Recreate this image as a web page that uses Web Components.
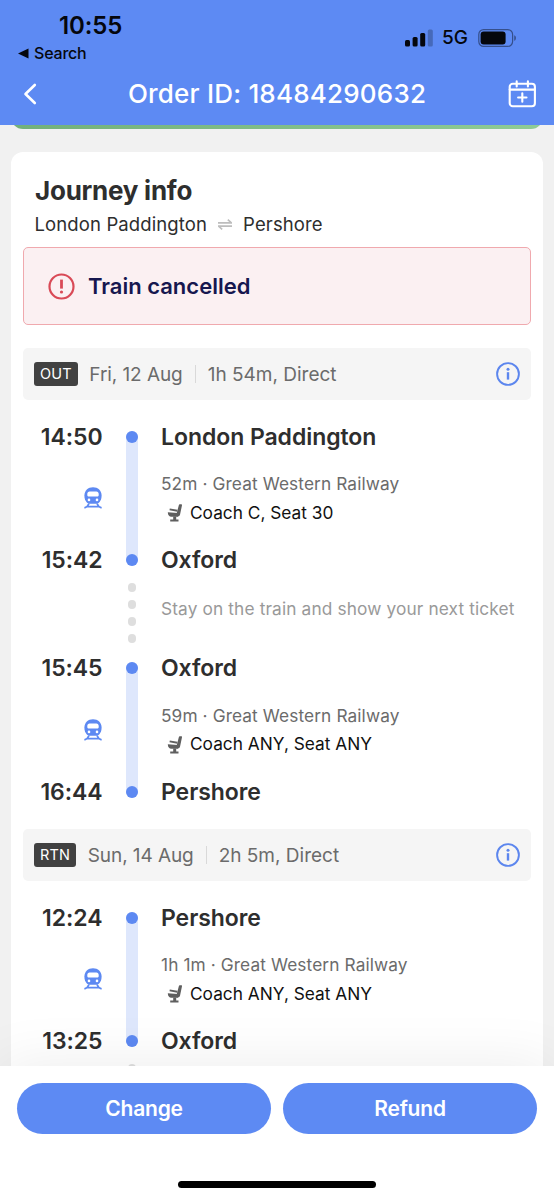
<!DOCTYPE html>
<html lang="en">
<head>
<meta charset="UTF-8">
<meta name="viewport" content="width=device-width, initial-scale=1.0">
<title>Order details</title>
<style>
  html, body {
    margin: 0;
    height: 100%;
  }
  body {
    background: #f1f1f1;
    color: #2e2e2e;
    font-family: Inter, "Liberation Sans", sans-serif;
    overflow: hidden;
  }
</style>
</head>
<body>
<order-page></order-page>

<script>
class StatusBar extends HTMLElement {
  constructor() {
    super();
    this.attachShadow({ mode: 'open' });
  }

  connectedCallback() {
    this.shadowRoot.innerHTML = `
      <style>
        :host {
          display: flex;
          justify-content: space-between;
          height: 66px;
          color: #05070d;
        }
        .left { padding: 12px 0 0 17px; }
        .time {
          padding-left: 42px;
          font-size: 24px;
          font-weight: 600;
          line-height: 28px;
          letter-spacing: -0.1px;
        }
        .back {
          display: flex;
          align-items: center;
          gap: 5px;
          height: 26px;
          font-size: 16px;
          font-weight: 500;
          letter-spacing: -0.2px;
        }
        .right {
          display: flex;
          align-items: center;
          height: 75px;
          padding-right: 37px;
          font-size: 19px;
          font-weight: 500;
        }
        .net { margin: 0 10px 0 9px; }
        svg { display: block; }
      </style>
      <div class="left">
        <div class="time">10:55</div>
        <div class="back">
          <svg width="12" height="11" viewBox="0 0 12 11"><path d="M1 5.500 11.500.4v10.200z" fill="#05070d"/></svg>
          <span>Search</span>
        </div>
      </div>
      <div class="right">
        <svg width="28" height="18" viewBox="0 0 28 18" fill="#05070d">
          <rect x="0" y="11" width="5" height="6.5" rx="1.5"/>
          <rect x="7.6" y="8" width="5" height="9.5" rx="1.5"/>
          <rect x="15.2" y="4" width="5" height="13.5" rx="1.5"/>
          <rect x="22.8" y="0.5" width="5" height="17" rx="1.5" opacity=".25"/>
        </svg>
        <span class="net">5G</span>
        <svg width="39" height="18" viewBox="0 0 39 18">
          <rect x=".8" y=".6" width="33.8" height="16.8" rx="4.8" fill="none" stroke="#05070d" stroke-opacity=".45" stroke-width="1.2"/>
          <rect x="2.6" y="2.4" width="25" height="13.2" rx="3" fill="#05070d"/>
          <path d="M36.4 6.2c1.8.8 1.8 4.8 0 5.6z" fill="#05070d" fill-opacity=".55"/>
        </svg>
      </div>
    `;
  }
}

class NavBar extends HTMLElement {
  constructor() {
    super();
    this.attachShadow({ mode: 'open' });
  }

  connectedCallback() {
    this.shadowRoot.innerHTML = `
      <style>
        :host {
          display: grid;
          grid-template-columns: 60px 1fr 60px;
          align-items: center;
          height: 56px;
          color: #fff;
        }
        .title {
          padding-bottom: 1px;
          text-align: center;
          font-size: 26px;
          font-weight: 500;
          letter-spacing: 0.2px;
          white-space: nowrap;
        }
        svg { display: block; }
        .back { margin-left: 23px; }
        .calendar { margin-left: 14px; }
      </style>
      <svg class="back" width="15" height="22" viewBox="0 0 15 22" fill="none" stroke="#fff" stroke-width="2.6" stroke-linecap="round" stroke-linejoin="round">
        <path d="M11.800 2 2.500 11 11.800 20"/>
      </svg>
      <div class="title"><slot></slot></div>
      <svg class="calendar" width="28" height="28" viewBox="0 0 28 28" fill="none" stroke="#fff" stroke-width="2.1" stroke-linecap="round">
        <rect x="1.700" y="3.800" width="25.200" height="22.400" rx="3"/>
        <path d="M1.700 9.600h25.200M8.700 1.200v5.200M19.900 1.200v5.200M14.300 13.300v8.400M10.100 17.500h8.400"/>
      </svg>
    `;
  }
}

class AlertBox extends HTMLElement {
  constructor() {
    super();
    this.attachShadow({ mode: 'open' });
  }

  connectedCallback() {
    this.shadowRoot.innerHTML = `
      <style>
        :host {
          display: flex;
          align-items: center;
          gap: 13px;
          box-sizing: border-box;
          height: 78px;
          margin: 0 12px;
          padding-left: 24px;
          border: 1.5px solid #f0a9ae;
          border-radius: 5px;
          background: #fbf0f2;
          color: #16174f;
          font-size: 22px;
          font-weight: 600;
        }
        svg { display: block; }
      </style>
      <svg width="27" height="27" viewBox="0 0 27 27">
        <circle cx="13.5" cy="13.5" r="12" fill="none" stroke="#d94a57" stroke-width="2.2"/>
        <path d="M13.5 6.600v9" stroke="#d94a57" stroke-width="2.8"/>
        <circle cx="13.5" cy="19" r="1.6" fill="#d94a57"/>
      </svg>
      <span><slot></slot></span>
    `;
  }
}

class LegHeader extends HTMLElement {
  constructor() {
    super();
    this.attachShadow({ mode: 'open' });
  }

  connectedCallback() {
    this.shadowRoot.innerHTML = `
      <style>
        :host {
          display: flex;
          align-items: center;
          box-sizing: border-box;
          height: 52px;
          margin: 0 12px;
          padding: 0 11px;
          border-radius: 5px;
          background: #f5f5f5;
          color: #6b6b6b;
          font-size: 19px;
        }
        .badge {
          padding: 0 6px;
          border-radius: 3px;
          background: #414141;
          color: #fff;
          font-size: 14.500px;
          line-height: 24px;
          letter-spacing: 0.2px;
        }
        .date {
          margin-left: 11.500px;
          letter-spacing: -0.080px;
        }
        .line {
          width: 1px;
          height: 18px;
          margin: 0 12px;
          background: #d9d9d9;
        }
        svg {
          display: block;
          margin-left: auto;
        }
      </style>
      <span class="badge">${this.getAttribute('badge')}</span>
      <span class="date">${this.getAttribute('date')}</span>
      <span class="line"></span>
      <span class="duration">${this.getAttribute('duration')}</span>
      <svg width="24" height="24" viewBox="0 0 24 24">
        <circle cx="12" cy="12" r="10.900" fill="none" stroke="#5c86ee" stroke-width="1.9"/>
        <path d="M12 10.2v7.400" stroke="#5c86ee" stroke-width="2.4"/>
        <circle cx="12" cy="7.2" r="1.5" fill="#5c86ee"/>
      </svg>
    `;
  }
}

// One ride: departure, arrival and the operator details between them
class TrainSegment extends HTMLElement {
  constructor() {
    super();
    this.attachShadow({ mode: 'open' });
  }

  connectedCallback() {
    this.shadowRoot.innerHTML = `
      <style>
        :host {
          display: grid;
          grid-template-columns: 92px 12px 1fr;
          grid-template-rows: 24px 1fr 24px;
          column-gap: 23px;
          height: 147.5px;
          white-space: nowrap;
        }
        .time, .station {
          font-size: 23px;
          font-weight: 600;
          line-height: 24px;
          letter-spacing: -0.060px;
        }
        .time {
          grid-column: 1;
          margin-right: 0.5px;
          text-align: right;
        }
        .station { grid-column: 3; }
        .rail {
          grid-column: 2;
          grid-row: 1 / 4;
          display: flex;
          flex-direction: column;
          justify-content: space-between;
          margin: 6px 0;
          border-radius: 6px;
          background: #dee7fc;
        }
        .dot {
          height: 12px;
          border-radius: 50%;
          background: #5d89f2;
        }
        .train {
          grid-column: 1;
          grid-row: 2;
          align-self: center;
          justify-self: end;
          margin-right: 1px;
        }
        .details {
          grid-column: 3;
          grid-row: 2;
          align-self: center;
          padding-top: 1px;
          font-size: 17.3px;
          line-height: 28.5px;
        }
        .operator {
          color: #6b6b6b;
          letter-spacing: 0.100px;
        }
        .seat {
          display: flex;
          align-items: center;
          gap: 7px;
          padding-left: 6px;
          color: #111;
        }
        svg { display: block; }
      </style>
      <div class="time" style="grid-row: 1">${this.getAttribute('from-time')}</div>
      <div class="time" style="grid-row: 3">${this.getAttribute('to-time')}</div>
      <div class="rail"><i class="dot"></i><i class="dot"></i></div>
      <svg class="train" width="18" height="22" viewBox="0 0 18 22">
        <path d="M9 .3C4 .3.4 3.600.4 8.600c0 3 .7 5 2.200 6.600 1.100 1.100 2.400 1.500 3.800 1.500h5.200c1.400 0 2.700-.4 3.800-1.500 1.500-1.600 2.200-3.600 2.200-6.600C17.600 3.600 14 .3 9 .3z" fill="#5d89f2"/>
        <path d="M5.600 4.600h6.800c1.300 0 2.300 1 2.300 2.300v1c0 1-.7 1.700-1.700 1.700H5c-1 0-1.700-.7-1.700-1.700v-1c0-1.300 1-2.300 2.300-2.300z" fill="#fff"/>
        <circle cx="5" cy="12.900" r="1.300" fill="#fff"/>
        <circle cx="13" cy="12.900" r="1.300" fill="#fff"/>
        <path d="M5 16.500C4 18.900 2.600 20.300.4 20.900M13 16.500c1 2.400 2.400 3.800 4.600 4.400M3.600 19.600h10.800" fill="none" stroke="#5d89f2" stroke-width="1.700"/>
      </svg>
      <div class="station" style="grid-row: 1">${this.getAttribute('from')}</div>
      <div class="details">
        <div class="operator">${this.getAttribute('operator')}</div>
        <div class="seat">
          <svg width="16" height="18" viewBox="0 0 16 18" fill="#5f5f5f">
            <path d="M11.900.9c.1-.4.400-.6.800-.6h1.600c.5 0 .8.400.7.900l-2 9.600c-.2.900-.7 1.400-1.600 1.400H9.800L9.500 9.900z"/>
            <path d="M2.800 4.500l7.700 1.200-.3 2L2.500 6.300z"/>
            <path d="M.8 8.200l9.700.9.800 3.700H4.400C2.300 12.800.8 11 .8 8.200z"/>
            <path d="M6.200 12.500h3v2.900h2.300v2.100H3.200v-2.100h3z"/>
          </svg>
          <span>${this.getAttribute('seat')}</span>
        </div>
      </div>
      <div class="station" style="grid-row: 3">${this.getAttribute('to')}</div>
    `;
  }
}

class TransferNote extends HTMLElement {
  constructor() {
    super();
    this.attachShadow({ mode: 'open' });
  }

  connectedCallback() {
    this.shadowRoot.innerHTML = `
      <style>
        :host {
          display: grid;
          grid-template-columns: 12px 1fr;
          column-gap: 23px;
          height: 84px;
          padding-left: 115px;
          color: #999;
          font-size: 17.3px;
          letter-spacing: 0.130px;
          white-space: nowrap;
        }
        .dots {
          display: flex;
          flex-direction: column;
          align-items: center;
          gap: 8.300px;
          padding-top: 10.800px;
        }
        .dots i {
          flex: none;
          width: 8.800px;
          height: 8.800px;
          border-radius: 50%;
          background: #dedede;
        }
        .note {
          padding-top: 24.500px;
          line-height: 24px;
        }
      </style>
      <div class="dots"><i></i><i></i><i></i><i></i></div>
      <div class="note"><slot></slot></div>
    `;
  }
}

class ActionBar extends HTMLElement {
  constructor() {
    super();
    this.attachShadow({ mode: 'open' });
  }

  connectedCallback() {
    this.shadowRoot.innerHTML = `
      <style>
        :host {
          display: flex;
          flex-direction: column;
          align-items: center;
          box-sizing: border-box;
          height: 134px;
          padding: 17px 17px 0;
          background: #fff;
          box-shadow: 0 0 60px rgba(0, 0, 0, 0.08);
        }
        .buttons {
          display: grid;
          grid-template-columns: 1fr 1fr;
          gap: 12px;
          width: 100%;
        }
        button {
          height: 51px;
          padding: 0;
          border: 0;
          border-radius: 26px;
          background: #5d8af3;
          color: #fff;
          font: 600 21px Inter, "Liberation Sans", sans-serif;
          letter-spacing: -0.200px;
        }
        .home {
          width: 198px;
          height: 7px;
          margin-top: 47px;
          border-radius: 4px;
          background: #000;
        }
      </style>
      <div class="buttons">
        <button>Change</button>
        <button>Refund</button>
      </div>
      <div class="home"></div>
    `;
  }
}

class OrderPage extends HTMLElement {
  constructor() {
    super();
    this.attachShadow({ mode: 'open' });
  }

  connectedCallback() {
    this.shadowRoot.innerHTML = `
      <style>
        :host {
          display: flex;
          flex-direction: column;
          height: 1200px;
          overflow: hidden;
        }
        header {
          position: relative;
          z-index: 1;
          flex: none;
          height: 125px;
          background: #5d8af3;
        }
        main {
          flex: 1;
          min-height: 0;
          overflow: hidden;
        }
        /* tail of the status card scrolled under the header */
        .status-card {
          height: 24px;
          margin: -20px 11px 0;
          border-radius: 0 0 12px 12px;
          background: linear-gradient(90deg, #72b07b, #8fcb95);
        }
        .card {
          margin: 23px 11px 0;
          padding-top: 23px;
          border-radius: 12px;
          background: #fff;
        }
        h1 {
          margin: 0 24px;
          font-size: 26px;
          font-weight: 700;
          line-height: 32px;
          letter-spacing: -0.250px;
        }
        .route {
          display: flex;
          align-items: center;
          height: 34px;
          margin: 0 24px 6px 23.500px;
          font-size: 18.500px;
          letter-spacing: 0.120px;
        }
        .route svg { margin: 0 11px; }
        .first { margin-top: 23px; }
        .second { margin-top: 25.5px; }
        .ride { margin-top: 24.5px; }
        action-bar {
          position: relative;
          flex: none;
        }
      </style>
      <header>
        <status-bar></status-bar>
        <nav-bar>Order ID: 18484290632</nav-bar>
      </header>
      <main>
        <div class="status-card"></div>
        <section class="card">
          <h1>Journey info</h1>
          <div class="route">
            <span>London Paddington</span>
            <svg width="14" height="11" viewBox="0 0 14 11" fill="none" stroke="#bdbdbd" stroke-width="1.600">
              <path d="M0 3.900h13.400L9.800.7M14 7.100H.6l3.600 3.200"/>
            </svg>
            <span>Pershore</span>
          </div>
          <alert-box>Train cancelled</alert-box>
          <leg-header class="first" badge="OUT" date="Fri, 12 Aug" duration="1h 54m, Direct"></leg-header>
          <train-segment class="ride" from-time="14:50" to-time="15:42" from="London Paddington" to="Oxford"
            operator="52m · Great Western Railway" seat="Coach C, Seat 30"></train-segment>
          <transfer-note>Stay on the train and show your next ticket</transfer-note>
          <train-segment from-time="15:45" to-time="16:44" from="Oxford" to="Pershore"
            operator="59m · Great Western Railway" seat="Coach ANY, Seat ANY"></train-segment>
          <leg-header class="second" badge="RTN" date="Sun, 14 Aug" duration="2h 5m, Direct"></leg-header>
          <train-segment class="ride" from-time="12:24" to-time="13:25" from="Pershore" to="Oxford"
            operator="1h 1m · Great Western Railway" seat="Coach ANY, Seat ANY"></train-segment>
          <transfer-note></transfer-note>
        </section>
      </main>
      <action-bar></action-bar>
    `;
  }
}

customElements.define('status-bar', StatusBar);
customElements.define('nav-bar', NavBar);
customElements.define('alert-box', AlertBox);
customElements.define('leg-header', LegHeader);
customElements.define('train-segment', TrainSegment);
customElements.define('transfer-note', TransferNote);
customElements.define('action-bar', ActionBar);
customElements.define('order-page', OrderPage);
</script>
</body>
</html>
